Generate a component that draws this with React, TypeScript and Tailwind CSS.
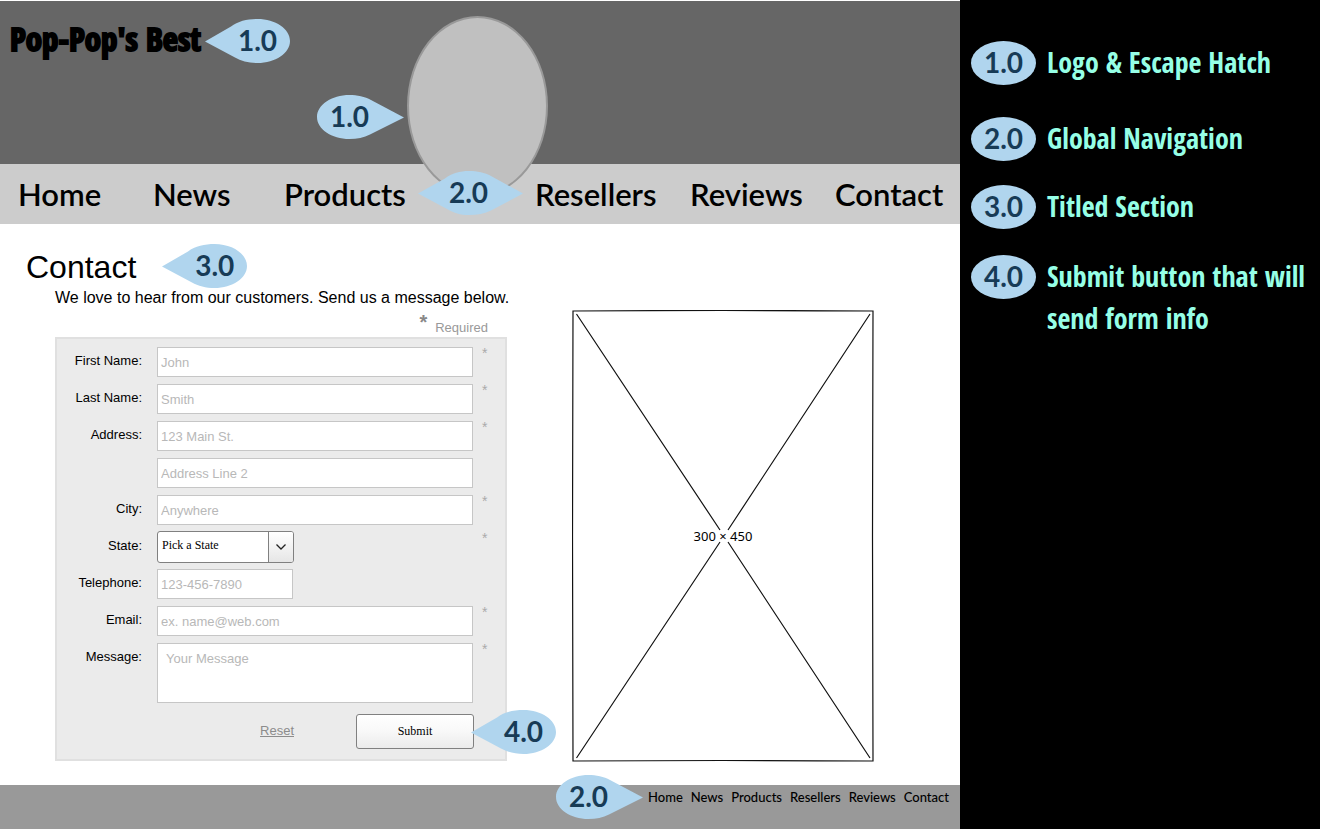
import React from "react";

type Direction = "none" | "left" | "right" | "both";

const shapes: Record<Direction, { width: number; path: string; pad: string }> = {
  none: { width: 65, pad: "", path: "M0 22a32.5 22 0 1 1 65 0a32.5 22 0 1 1 -65 0Z" },
  left: {
    width: 85,
    pad: "pl-5",
    path: "M0 22.5L26 7.5C33 2 43 0 52.5 0C70.500 0 85 10 85 22C85 34 70.500 44 52.500 44C44 44 36 42 30 38.500Z",
  },
  right: {
    width: 87,
    pad: "pr-[22px]",
    path: "M87 22.5L54 5C48 1.500 40 0 32.500 0C14.500 0 0 10 0 22C0 34 14.500 44 32.500 44C40 44 47 42.500 53 39.500Z",
  },
  both: {
    width: 105,
    pad: "pr-1",
    path: "M0 22.5L27 7.500C34 2 42 0 51 0C59 0 67 1.500 73 5L105 22.500L73 39.500C67 42.500 59 44 51 44C42 44 36 42 30 38.500Z",
  },
};

function Callout({ label, point = "none" }: { label: string; point?: Direction }) {
  const { width, path, pad } = shapes[point];
  return (
    <span className="inline-grid h-11 shrink-0 items-center justify-items-center align-top">
      <svg
        className="col-start-1 row-start-1 block"
        width={width}
        height={44}
        viewBox={`0 0 ${width} 44`}
        aria-hidden="true"
      >
        <path d={path} fill="#b0d5ee" />
      </svg>
      <span
        className={`col-start-1 row-start-1 pb-0.5 font-['Lato',sans-serif] text-[28px] leading-8 font-bold text-[#173b56] ${pad}`}
      >
        {label}
      </span>
    </span>
  );
}

const links = ["Home", "News", "Products", "Resellers", "Reviews", "Contact"];

const legend = [
  { id: "1.0", text: "Logo & Escape Hatch", space: "mt-10" },
  { id: "2.0", text: "Global Navigation", space: "mt-8" },
  { id: "3.0", text: "Titled Section", space: "mt-6" },
  { id: "4.0", text: "Submit button that will send form info", space: "mt-[26px]" },
];

const box =
  "block border border-[#c6c6c6] bg-white text-[13px] text-black outline-none placeholder:text-[#b8b8b8] placeholder:opacity-100";

function Row({
  id,
  label,
  required = false,
  children,
}: {
  id: string;
  label: string;
  required?: boolean;
  children: React.ReactNode;
}) {
  return (
    <div className="flex items-start">
      <label htmlFor={id} className="w-[85px] shrink-0 pt-1 text-right text-[13px] leading-5">
        {label}
      </label>
      <div className="ml-[15px] w-[316px]">{children}</div>
      {required && <span className="ml-[9px] text-sm leading-3 text-[#aaa]">*</span>}
    </div>
  );
}

function Field({
  id,
  label,
  hint,
  type = "text",
  required = true,
  short = false,
}: {
  id: string;
  label: string;
  hint: string;
  type?: string;
  required?: boolean;
  short?: boolean;
}) {
  return (
    <Row id={id} label={label} required={required}>
      <input
        id={id}
        type={type}
        placeholder={hint}
        aria-label={label ? undefined : hint}
        className={`${box} h-[30px] px-[3px] ${short ? "w-[136px]" : "w-full"}`}
      />
    </Row>
  );
}

function ContactForm() {
  return (
    <form
      className="flex w-[452px] flex-col gap-[7px] border-2 border-[#e0e0e0] bg-[#ebebeb] pt-2 pb-2.5"
      onSubmit={(e) => e.preventDefault()}
    >
      <Field id="first" label="First Name:" hint="John" />
      <Field id="last" label="Last Name:" hint="Smith" />
      <Field id="address" label="Address:" hint="123 Main St." />
      <Field id="address2" label="" hint="Address Line 2" required={false} />
      <Field id="city" label="City:" hint="Anywhere" />
      <Row id="state" label="State:" required>
        <div className="relative -my-px h-8 w-[137px]">
          <select
            id="state"
            className="block h-8 w-full appearance-none rounded-[3px] border border-[#808080] bg-white pb-1 pl-1 font-['Liberation_Serif',serif] text-xs text-black"
          >
            <option>Pick a State</option>
          </select>
          <span className="pointer-events-none absolute inset-y-px right-px flex w-[25px] items-center justify-center rounded-r-[2px] border-l border-[#808080] bg-linear-to-b from-white to-[#e6e6e6]">
            <svg width="10" height="6" viewBox="0 0 10 6" fill="none" stroke="#222" strokeWidth="1.3" aria-hidden="true">
              <path d="M0.500 0.500L5 5L9.500 0.500" />
            </svg>
          </span>
        </div>
      </Row>
      <Field id="phone" label="Telephone:" hint="123-456-7890" type="tel" required={false} short />
      <Field id="email" label="Email:" hint="ex. name@web.com" type="email" />
      <Row id="message" label="Message:" required>
        <textarea
          id="message"
          placeholder="Your Message"
          className={`${box} h-[60px] w-full resize-none px-2 py-1.5 leading-[18px]`}
        />
      </Row>
      <div className="mt-1 mr-[31px] flex items-start justify-end gap-[62px]">
        <button type="reset" className="mt-[7px] text-[13px] leading-5 text-[#8c8c8c] underline">
          Reset
        </button>
        <div className="relative">
          <button
            type="submit"
            className="block h-[35px] w-[118px] rounded-[3px] border border-[#808080] bg-linear-to-b from-white via-[#f8f8f8] to-[#ebebeb] pb-0.5 font-['Liberation_Serif',serif] text-xs text-black"
          >
            Submit
          </button>
          <div className="absolute -top-1 left-full -ml-[3px]">
            <Callout label="4.0" point="left" />
          </div>
        </div>
      </div>
    </form>
  );
}

function ImagePlaceholder() {
  return (
    <svg
      className="-mb-px block shrink-0"
      width="302"
      height="452"
      viewBox="0 0 302 452"
      fill="none"
      stroke="#111"
      strokeWidth="1.200"
      role="img"
      aria-label="300 × 450"
    >
      <path d="M1 1Q150 0 301 1Q300 226 301 451Q150 450 1 451Q0 226 1 1Z" />
      <path d="M4.500 4L148 220M156 232L298 448M298 4L156 220M148 232L4.500 448" />
      <text
        x="151"
        y="231"
        textAnchor="middle"
        fill="#000"
        stroke="none"
        className="font-['Noto_Sans',sans-serif] text-[13px]"
      >
        300 × 450
      </text>
    </svg>
  );
}

export default function App() {
  return (
    <div className="flex min-h-screen bg-white font-['Liberation_Sans',Arial,sans-serif] text-black">
      <div className="flex min-w-0 flex-1 flex-col">
        <header className="relative flex h-[164px] items-start border-t border-white bg-[#666] pt-[18px] pl-2.5">
          <a
            href="#home"
            className="w-[195px] font-['Open_Sans_Condensed',sans-serif] text-[33px] leading-10 font-bold whitespace-nowrap [-webkit-text-stroke:2px_black]"
          >
            Pop-Pop's Best
          </a>
          <Callout label="1.0" point="left" />
          <div className="absolute top-[15px] left-1/2 -ml-[73px] h-[180px] w-[141px]">
            <div className="h-full w-full rounded-[50%] border-2 border-[#999] bg-[#c0c0c0]" />
            <div className="absolute top-[79px] right-full mr-[3px]">
              <Callout label="1.0" point="right" />
            </div>
          </div>
        </header>

        <nav className="grid h-[60px] grid-cols-[135fr_131fr_134fr_117fr_155fr_145fr_125fr] items-center bg-[#ccc] pl-[18px] font-['Lato',sans-serif] text-[31px] leading-10 font-semibold">
          {links.map((name) => (
            <React.Fragment key={name}>
              {name === "Resellers" && (
                <div className="relative -mt-0.5 h-11">
                  <Callout label="2.0" point="both" />
                </div>
              )}
              <a href={`#${name.toLowerCase()}`} className="min-w-0">
                {name}
              </a>
            </React.Fragment>
          ))}
        </nav>

        <main className="flex items-end gap-[65px] pt-5 pb-6">
          <section className="w-[507px] shrink-0">
            <div className="flex h-11 items-center gap-[26px] pl-[26px]">
              <h1 className="pt-0.5 text-[32px] leading-11">Contact</h1>
              <Callout label="3.0" point="left" />
            </div>
            <div className="pl-[55px]">
              <p className="text-base leading-5 whitespace-nowrap">
                We love to hear from our customers. Send us a message below.
              </p>
              <p className="flex h-[29px] items-start justify-end gap-2 pr-[19px] text-[13px] text-[#999]">
                <span className="pt-1 text-xl leading-5 font-bold text-[#888]">*</span>
                <span className="pt-2.5 leading-5">Required</span>
              </p>
              <ContactForm />
            </div>
          </section>
          <ImagePlaceholder />
        </main>

        <footer className="flex min-h-11 flex-1 items-start justify-end bg-[#999] pr-[11px]">
          <div className="-mt-2.5 mr-[5px] h-11">
            <Callout label="2.0" point="right" />
          </div>
          <nav className="flex gap-2 pt-0.5 font-['Lato',sans-serif] text-[13px] leading-5 font-medium">
            {links.map((name) => (
              <a key={name} href={`#${name.toLowerCase()}`}>
                {name}
              </a>
            ))}
          </nav>
        </footer>
      </div>

      <aside className="w-[360px] shrink-0 bg-black pt-px pl-[11px]">
        <ul>
          {legend.map((item) => (
            <li key={item.id} className={`flex items-start gap-[11px] ${item.space}`}>
              <Callout label={item.id} />
              <span className="w-[265px] font-['Open_Sans_Condensed',sans-serif] text-[28px] leading-[42px] font-bold text-[#96ffe6]">
                {item.text}
              </span>
            </li>
          ))}
        </ul>
      </aside>
    </div>
  );
}
